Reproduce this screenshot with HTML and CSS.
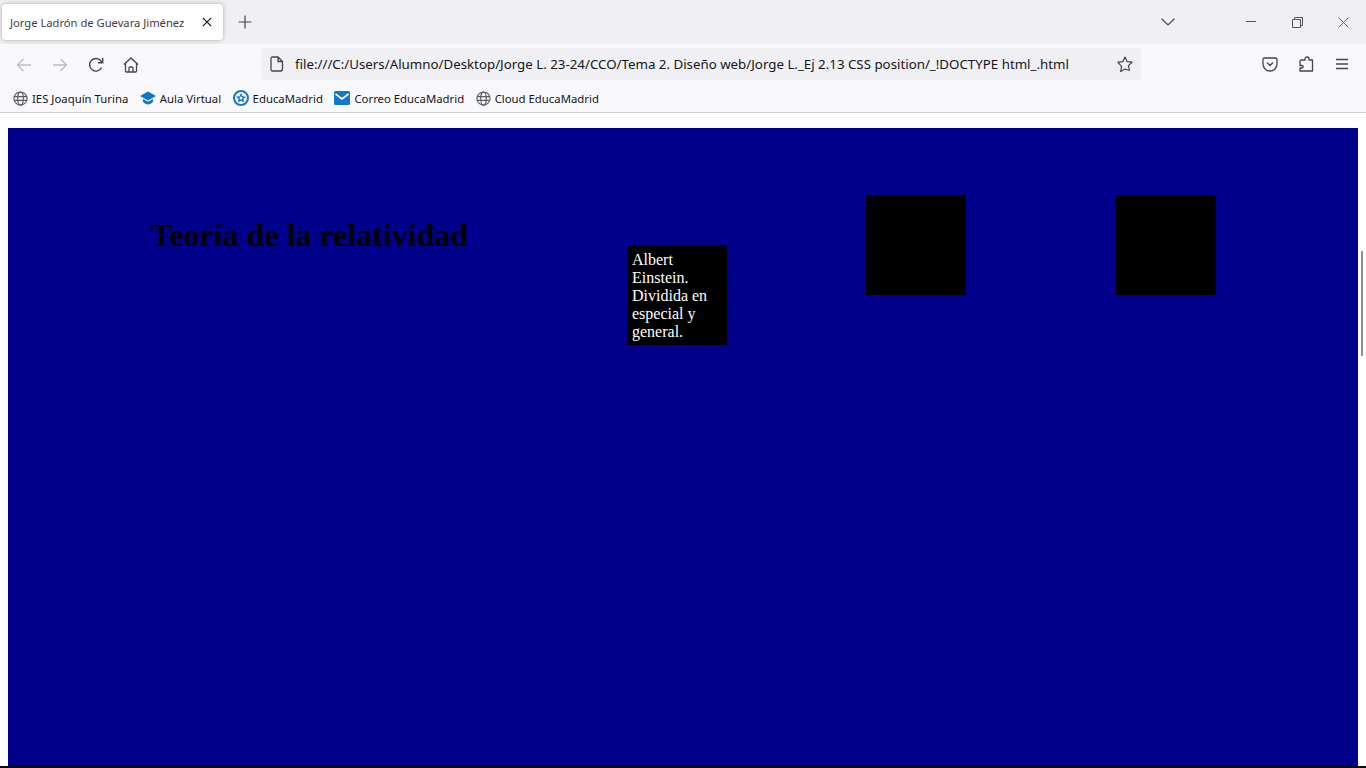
FILE: index.html

```html
<!DOCTYPE html>
<html lang="es">
<head>
  <meta charset="UTF-8" />
  <title>Jorge Ladrón de Guevara Jiménez</title>
  <link rel="stylesheet" href="styles.css">
</head>
<body>

<header class="browser">
  <div class="tabbar">
    <div class="tab">
      <span class="tab-title">Jorge Ladrón de Guevara Jiménez</span>
      <svg class="tab-close" width="10" height="10" viewBox="0 0 10 10"><path d="M.8.8l8.4 8.4M9.2.8L.8 9.2" stroke="#15141a" stroke-width="1.2" fill="none"/></svg>
    </div>
    <div class="btn new-tab">
      <svg width="14" height="14" viewBox="0 0 14 14"><path d="M7 .5v13M.5 7h13" stroke="#45444c" stroke-width="1.2" fill="none"/></svg>
    </div>
    <div class="btn tab-list">
      <svg width="14" height="8" viewBox="0 0 14 8"><path d="M.6.8L7 7l6.4-6.2" stroke="#45444c" stroke-width="1.2" fill="none"/></svg>
    </div>
    <div class="caption">
      <svg width="10" height="10" viewBox="0 0 10 10"><path d="M0 4.500h10" stroke="#55545c" stroke-width="1" fill="none"/></svg>
    </div>
    <div class="caption">
      <svg width="11" height="11" viewBox="0 0 11 11"><path d="M.5 2.500h8v8h-8zM2.500 2.500v-2h8v8h-2" stroke="#55545c" stroke-width="1" fill="none"/></svg>
    </div>
    <div class="caption">
      <svg width="11" height="11" viewBox="0 0 11 11"><path d="M.5.5l10 10M10.500.5l-10 10" stroke="#55545c" stroke-width=".9" fill="none"/></svg>
    </div>
  </div>

  <nav class="navbar">
    <div class="btn">
      <svg width="16" height="16" viewBox="0 0 16 16"><path d="M15 8H1.500M7.500 2L1.500 8l6 6" stroke="#bdbdc2" stroke-width="1.400" fill="none"/></svg>
    </div>
    <div class="btn">
      <svg width="16" height="16" viewBox="0 0 16 16"><path d="M1 8h13.500M8.500 2l6 6-6 6" stroke="#bdbdc2" stroke-width="1.400" fill="none"/></svg>
    </div>
    <div class="btn">
      <svg width="16" height="16" viewBox="0 0 16 16"><path d="M13.600 10.500A6.300 6.300 0 1 1 12.800 3.800L14.500 5.500M14.700 1v4.700H10" stroke="#45444c" stroke-width="1.400" fill="none"/></svg>
    </div>
    <div class="btn home">
      <svg width="16" height="16" viewBox="0 0 16 16"><path d="M1 7.500L8 1l7 6.500M2.500 6.500V14a1 1 0 0 0 1 1h9a1 1 0 0 0 1-1V6.500M6 15v-4a1 1 0 0 1 1-1h2a1 1 0 0 1 1 1v4" stroke="#45444c" stroke-width="1.300" fill="none"/></svg>
    </div>
    <div class="urlbar">
      <svg class="url-icon" width="14" height="16" viewBox="0 0 14 16"><path d="M2.500 1h5.500l4.500 4.500V13a2 2 0 0 1-2 2h-8a1.500 1.500 0 0 1-1.500-1.500v-11A1.500 1.500 0 0 1 2.500 1zM8 1v4.500h4.500" stroke="#45444c" stroke-width="1.300" fill="none"/></svg>
      <span class="url-text">file:///C:/Users/Alumno/Desktop/Jorge L. 23-24/CCO/Tema 2. Diseño web/Jorge L._Ej 2.13 CSS position/_!DOCTYPE html_.html</span>
      <svg class="star" width="16" height="16" viewBox="0 0 16 16"><path d="M8 1l2.100 4.600 5 .6-3.700 3.400 1 4.900L8 13l-4.400 2.500 1-4.900L.9 6.200l5-.6z" stroke="#45444c" stroke-width="1.200" stroke-linejoin="round" fill="none"/></svg>
    </div>
    <div class="nav-right">
      <div class="btn">
        <svg width="16" height="16" viewBox="0 0 16 16"><path d="M2.500 2h11A1.500 1.500 0 0 1 15 3.500V8a7 7 0 0 1-14 0V3.500A1.500 1.500 0 0 1 2.500 2zM5 6.500L8 9.500l3-3" stroke="#45444c" stroke-width="1.300" fill="none"/></svg>
      </div>
      <div class="btn">
        <svg width="16" height="16" viewBox="0 0 16 16"><path d="M9 1c1.300 0 2 1 2 2v1h3a.5.500 0 0 1 .5.500V15H2v-3h2c1.500 0 1.500-2.500 0-2.500H2V5.500A1.500 1.500 0 0 1 3.500 4H7V3c0-1 .7-2 2-2z" stroke="#45444c" stroke-width="1.300" stroke-linejoin="round" fill="none"/></svg>
      </div>
      <div class="btn">
        <svg width="14" height="12" viewBox="0 0 14 12"><path d="M1 1.500h12M1 6h12M1 10.500h12" stroke="#45444c" stroke-width="1.400" fill="none"/></svg>
      </div>
    </div>
  </nav>

  <div class="bookmarks">
    <a class="bookmark">
      <svg width="15" height="15" viewBox="0 0 16 16"><g stroke="#5b5b66" stroke-width="1.200" fill="none"><circle cx="8" cy="8" r="7"/><ellipse cx="8" cy="8" rx="3" ry="7"/><path d="M1 6h14M1 10h14"/></g></svg>
      <span>IES Joaquín Turina</span>
    </a>
    <a class="bookmark">
      <svg width="16" height="16" viewBox="0 0 16 16"><path d="M8 1.500L0 6l8 4.500L16 6z" fill="#0f77c7"/><path d="M3 9v2.800C4.500 13.500 6.300 14.500 8 14.500s3.500-1 5-2.700V9l-5 2.800z" fill="#0f77c7"/></svg>
      <span>Aula Virtual</span>
    </a>
    <a class="bookmark">
      <svg width="16" height="16" viewBox="0 0 16 16"><circle cx="8" cy="8" r="7" stroke="#1478c8" stroke-width="2" fill="none"/><path d="M8 3l1.500 3.300 3.500.4-2.600 2.400.7 3.500L8 10.800l-3.100 1.800.7-3.500L3 6.700l3.500-.4z" fill="#1478c8"/><circle cx="8" cy="8" r="1.500" fill="#fff"/></svg>
      <span>EducaMadrid</span>
    </a>
    <a class="bookmark">
      <svg width="16" height="16" viewBox="0 0 16 16"><rect y="1" width="16" height="14" rx="1.500" fill="#1478c8"/><path d="M1.500 4L8 9l6.500-5" stroke="#fff" stroke-width="1.600" fill="none"/></svg>
      <span>Correo EducaMadrid</span>
    </a>
    <a class="bookmark">
      <svg width="15" height="15" viewBox="0 0 16 16"><g stroke="#5b5b66" stroke-width="1.200" fill="none"><circle cx="8" cy="8" r="7"/><ellipse cx="8" cy="8" rx="3" ry="7"/><path d="M1 6h14M1 10h14"/></g></svg>
      <span>Cloud EducaMadrid</span>
    </a>
  </div>
</header>

<main class="viewport">
  <div class="page">
    <h1 class="title">Teoría de la relatividad</h1>
    <div class="note">Albert Einstein. Dividida en especial y general.</div>
    <div class="square first"></div>
    <div class="square second"></div>
  </div>
  <div class="scrollthumb"></div>
</main>

<div class="taskbar-edge"></div>

</body>
</html>
```

FILE: styles.css

```css
html, body {
  height: 100%;
}
body {
  margin: 0;
  display: flex;
  flex-direction: column;
  overflow: hidden;
  background: white;
  font-family: "Noto Sans", "Open Sans", sans-serif;
  color: #15141a;
}
.browser {
  flex: none;
}
.btn {
  width: 36px;
  height: 32px;
  flex: none;
  display: flex;
  align-items: center;
  justify-content: center;
}

/* tabs */
.tabbar {
  height: 44px;
  display: flex;
  align-items: center;
  background: #f0f0f4;
}
.tab {
  width: 221px;
  height: 36px;
  margin-left: 2px;
  padding: 0 11px 0 8px;
  box-sizing: border-box;
  display: flex;
  align-items: center;
  justify-content: space-between;
  background: white;
  border-radius: 4px;
  box-shadow: 0 0 4px rgba(0,0,0,0.3);
}
.tab-title {
  font-size: 11.2px;
  white-space: nowrap;
  color: #3d3a48;
}
.new-tab {
  margin-left: 4px;
}
.tab-list {
  margin-left: auto;
  margin-right: 42px;
}
.caption {
  width: 46px;
  height: 44px;
  flex: none;
  display: flex;
  align-items: center;
  justify-content: center;
}

/* toolbar */
.navbar {
  height: 44px;
  padding: 4px 6px 0;
  box-sizing: border-box;
  display: flex;
  align-items: flex-start;
  background: #f9f9fb;
}
.navbar > .btn {
  margin-top: 1px;
}
.home {
  margin-left: -1px;
}
.urlbar {
  width: 880px;
  height: 32px;
  margin-left: 112px;
  padding: 0 8px 0 9px;
  box-sizing: border-box;
  display: flex;
  align-items: center;
  background: #f0f0f4;
  border-radius: 4px;
}
.url-text {
  margin-left: 11px;
  font-size: 13.3px;
  white-space: nowrap;
}
.star {
  margin-left: auto;
}
.nav-right {
  margin-left: auto;
  display: flex;
}

/* bookmarks */
.bookmarks {
  height: 25px;
  padding: 0 0 4px 13px;
  box-sizing: border-box;
  display: flex;
  align-items: center;
  gap: 11.5px;
  background: #f9f9fb;
  border-bottom: 1px solid #ccc;
  font-size: 11.35px;
}
.bookmark {
  display: flex;
  align-items: center;
  gap: 4px;
  white-space: nowrap;
}

/* page */
.viewport {
  flex: 1;
  padding: 15px 8px 0;
  display: flex;
  position: relative;
}
.page {
  flex: 1;
  padding: 67px 0 0 143px;
  display: flex;
  align-items: flex-start;
  background: darkblue;
}
.title {
  width: 477px;
  flex: none;
  margin: 22px 0 0;
  font-family: "Liberation Serif", serif;
  font-size: 32px;
  font-weight: bold;
  color: black;
}
.note {
  width: 99px;
  height: 100px;
  flex: none;
  margin-top: 50px;
  margin-right: 1px;
  padding: 6px 4px 0;
  box-sizing: border-box;
  background: black;
  color: white;
  font-family: "Liberation Serif", serif;
  font-size: 16px;
}
.square {
  width: 100px;
  height: 100px;
  flex: none;
  background: black;
}
.first {
  margin-left: 138px;
}
.second {
  margin-left: 150px;
}
.scrollthumb {
  position: absolute;
  top: 138px;
  right: 3px;
  width: 2px;
  height: 105px;
  background: #8f8f8f;
}
.taskbar-edge {
  height: 2px;
  flex: none;
  background: #0b0b0b;
}
```
